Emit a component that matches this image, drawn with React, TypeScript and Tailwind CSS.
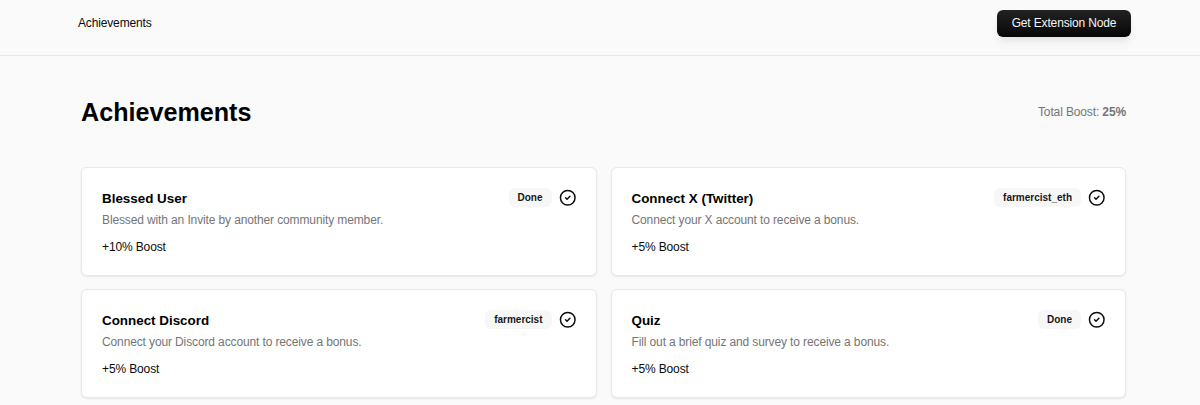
import React from 'react';
import { CircleCheck } from 'lucide-react';

interface Achievement {
  title: string;
  description: string;
  boost: string;
  badge: string;
}

const achievements: Achievement[] = [
  { title: 'Blessed User', description: 'Blessed with an Invite by another community member.', boost: '+10% Boost', badge: 'Done' },
  { title: 'Connect X (Twitter)', description: 'Connect your X account to receive a bonus.', boost: '+5% Boost', badge: 'farmercist_eth' },
  { title: 'Connect Discord', description: 'Connect your Discord account to receive a bonus.', boost: '+5% Boost', badge: 'farmercist' },
  { title: 'Quiz', description: 'Fill out a brief quiz and survey to receive a bonus.', boost: '+5% Boost', badge: 'Done' },
];

const Header: React.FC = () => (
  <header className="flex h-14 items-start justify-between border-b border-[#e6e6e6] pl-[78px] pr-[69px] pt-2.5">
    <span className="pt-[5px] text-xs leading-4 tracking-[-0.15px]">Achievements</span>
    <button className="h-[27px] w-[134px] rounded-md bg-gradient-to-b from-[#222] to-[#080808] pb-px text-xs tracking-[-0.15px] text-[#f5f5f5] shadow-[0_6px_10px_-2px_rgba(0,0,0,0.1)]">
      Get Extension Node
    </button>
  </header>
);

const AchievementCard: React.FC<{ item: Achievement }> = ({ item }) => (
  <article className="h-[109px] rounded-md border border-[#e8e8e8] bg-white pl-5 pr-[19px] pt-5 shadow-[0_1px_2px_rgba(0,0,0,0.08)]">
    <div className="flex h-5 items-start justify-between">
      <h2 className="pt-px text-[13.4px] font-bold leading-5 text-black">{item.title}</h2>
      <div className="flex items-center gap-[7px]">
        <span className="rounded-md bg-[#f7f7f7] px-[9px] text-[10px] font-bold leading-[19px] text-[#171717]">{item.badge}</span>
        <CircleCheck className="mr-[0.5px] h-[17.5px] w-[17.5px]" strokeWidth={2} />
      </div>
    </div>
    <p className="mt-1 text-xs leading-4 tracking-[-0.125px] text-[#757575]">{item.description}</p>
    <p className="mt-[11px] text-xs leading-4 tracking-[-0.13px]">{item.boost}</p>
  </article>
);

export default function App() {
  return (
    <div className="h-[405px] overflow-hidden bg-[#fafafa] font-['Liberation_Sans',Arial,sans-serif] text-[#0a0a0a]">
      <Header />
      <main className="pl-[81px] pr-[74px] pt-10">
        <div className="flex h-8 items-center justify-between">
          <h1 className="pt-px text-[25.15px] font-bold text-black">Achievements</h1>
          <p className="text-xs tracking-[-0.13px] text-[#757575]">
            Total Boost: <strong>25%</strong>
          </p>
        </div>
        <section className="mt-[39px] grid grid-cols-2 gap-x-[14px] gap-y-[13px]">
          {achievements.map((item) => (
            <AchievementCard key={item.title} item={item} />
          ))}
        </section>
      </main>
    </div>
  );
}
